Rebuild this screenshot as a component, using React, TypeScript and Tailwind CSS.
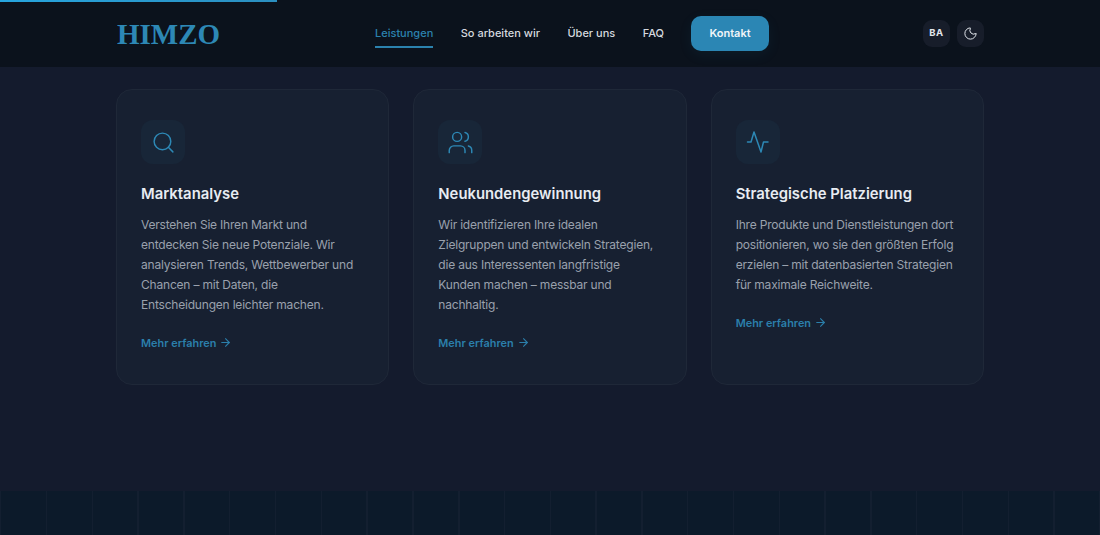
import { Search, Users, Moon, ArrowRight } from "lucide-react";

function Pulse() {
  return (
    <svg width="24" height="24" viewBox="0 0 24 24" fill="none" stroke="currentColor" strokeWidth="1.5" strokeLinecap="round" strokeLinejoin="round">
      <polyline points="1.5 12 5 12 8 2 15 22 17.5 12 22 12" />
    </svg>
  );
}

const cards = [
  {
    icon: <Search size={25} strokeWidth={1.4} />,
    title: "Marktanalyse",
    text: "Verstehen Sie Ihren Markt und entdecken Sie neue Potenziale. Wir analysieren Trends, Wettbewerber und Chancen – mit Daten, die Entscheidungen leichter machen.",
  },
  {
    icon: <Users size={27} strokeWidth={1.3} />,
    title: "Neukundengewinnung",
    text: "Wir identifizieren Ihre idealen Zielgruppen und entwickeln Strategien, die aus Interessenten langfristige Kunden machen – messbar und nachhaltig.",
  },
  {
    icon: <Pulse />,
    title: "Strategische Platzierung",
    text: "Ihre Produkte und Dienstleistungen dort positionieren, wo sie den größten Erfolg erzielen – mit datenbasierten Strategien für maximale Reichweite.",
  },
];

export default function App() {
  return (
    <div className="relative flex h-[535px] w-full flex-col overflow-hidden bg-[#141b2d] font-['Inter',sans-serif]">
      <div className="absolute left-0 top-0 h-[2px] w-[277px] bg-[linear-gradient(90deg,#27a5de,#2b8fc0)]" />
      <header className="flex h-[67px] shrink-0 items-center bg-[#0b121c] px-[116px]">
        <div className="w-[259px] pl-[1px] pt-[2px] font-['Liberation_Serif',serif] text-[29px] font-bold leading-none text-[#2d88b5]">
          HIMZO
        </div>
        <nav className="flex items-center text-[11px] font-medium text-[#d5d9df]">
          <a className="relative mr-[27.5px] text-[#2b82ae]">
            Leistungen
            <span className="absolute bottom-[-6px] left-0 h-[1.5px] w-full bg-[#2b82ae]" />
          </a>
          <a className="mr-[27.5px]">So arbeiten wir</a>
          <a className="mr-[27.5px]">Über uns</a>
          <a className="mr-[27px]">FAQ</a>
          <a className="flex h-[35px] w-[78px] items-center justify-center rounded-[10px] bg-[#2b86b4] font-semibold text-[#f1f5f9] shadow-[0_4px_14px_rgba(43,134,180,0.08)]">
            Kontakt
          </a>
        </nav>
        <div className="ml-auto flex items-center gap-[7px]">
          <button className="flex h-[27px] w-[27px] items-center justify-center rounded-[9px] bg-[#171d2a] text-[9.5px] font-bold tracking-[0.5px] text-[#e2e6ec]">
            BA
          </button>
          <button className="flex h-[27px] w-[27px] items-center justify-center rounded-[9px] bg-[#171d2a] text-[#e2e6ec]">
            <Moon size={15} strokeWidth={1.6} />
          </button>
        </div>
      </header>
      <main className="flex-1 px-[116px] pt-[22px]">
        <div className="grid grid-cols-3 gap-6">
          {cards.map(({ icon, title, text }) => (
            <article
              key={title}
              className="flex h-[296px] flex-col items-start rounded-[16px] border border-[#1f2838] bg-[#172031] px-6 pt-[30px]"
            >
              <div className="flex h-[44px] w-[44px] items-center justify-center rounded-[12px] bg-[#182638] text-[#2d88b5]">
                {icon}
              </div>
              <h3 className="mt-[19px] text-[14.85px] font-semibold leading-[22px] text-[#e8ecf2]">{title}</h3>
              <p className="mt-[10px] text-[12px] leading-[20px] tracking-[-0.2px] text-[#9aa1ad]">{text}</p>
              <a className="mt-[18.5px] flex items-center gap-[3px] text-[10.9px] font-semibold leading-[18px] text-[#2b7fab]">
                Mehr erfahren
                <ArrowRight size={13} strokeWidth={2} />
              </a>
            </article>
          ))}
        </div>
      </main>
      <footer className="h-[44px] shrink-0 bg-[#0c1a2a] bg-[repeating-linear-gradient(90deg,#131f30_0,#131f30_1.5px,transparent_1.5px,transparent_45.8px)]" />
    </div>
  );
}
